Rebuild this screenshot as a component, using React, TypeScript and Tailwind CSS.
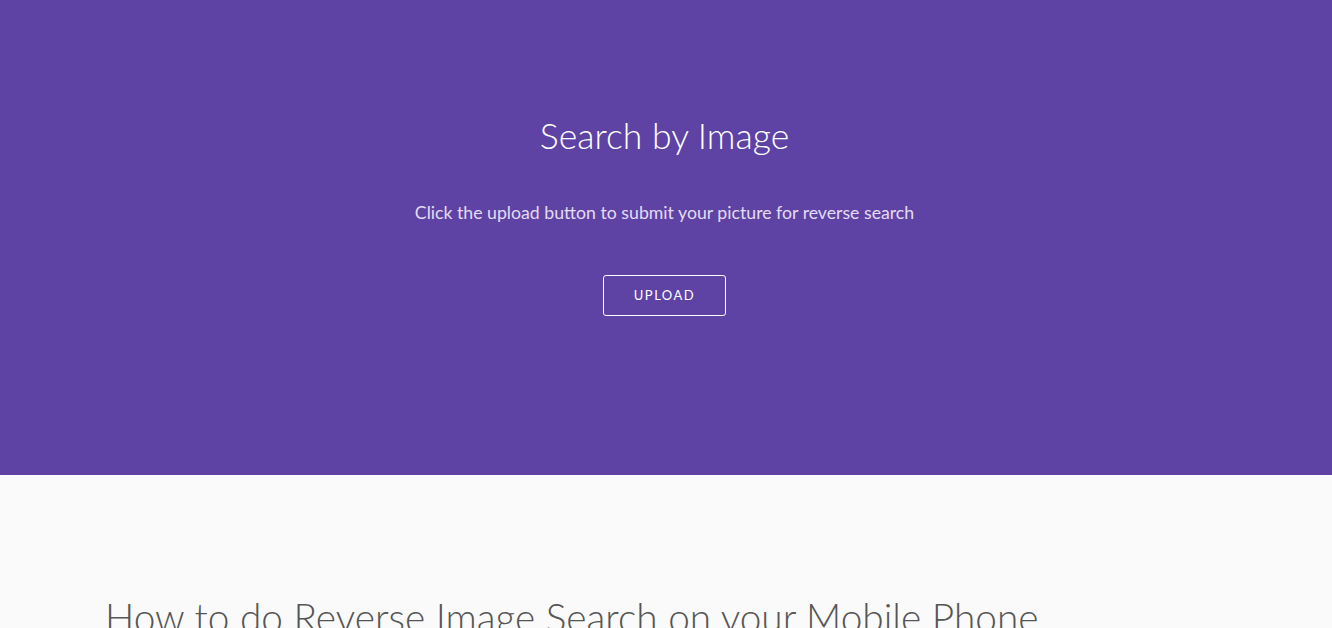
export default function App() {
  return (
    <div className="min-h-screen bg-[#fafafa]" style={{ fontFamily: "Lato, 'Noto Sans', sans-serif" }}>
      <section className="h-[475px] bg-[#5e43a5] flex flex-col items-center pt-[114px] pr-[3px]">
        <h1 className="text-[35.6px] leading-[44px] font-light text-white">Search by Image</h1>
        <p className="mt-[43px] text-[17.7px] leading-[24px] text-[#e3dcf2]">
          Click the upload button to submit your picture for reverse search
        </p>
        <button className="mt-[50px] w-[123px] h-[41px] border border-white rounded-[3px] text-[13px] tracking-[1.5px] text-white">
          UPLOAD
        </button>
      </section>
      <section className="px-[105px] pt-[117px]">
        <h2 className="text-[38.8px] leading-[50px] font-light text-[#555]">
          How to do Reverse Image Search on your Mobile Phone
        </h2>
      </section>
    </div>
  );
}
